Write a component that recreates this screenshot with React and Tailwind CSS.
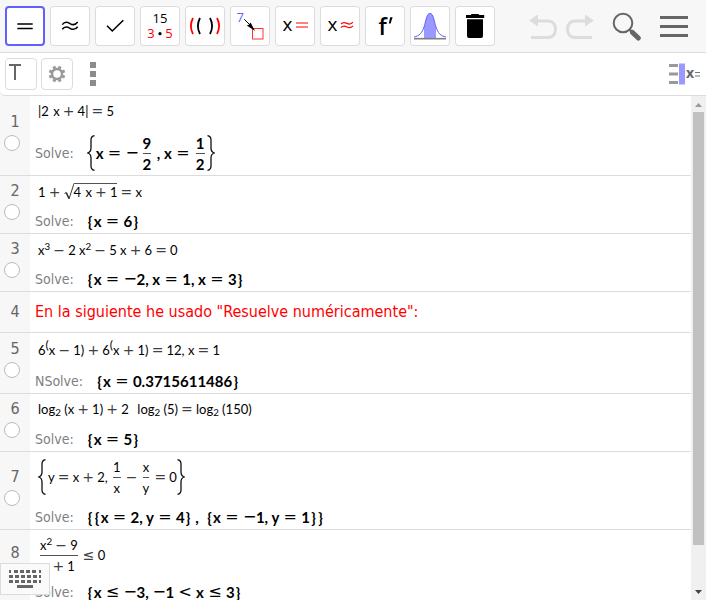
import React from "react";

const UI = "font-['DejaVu_Sans_Condensed','DejaVu_Sans',sans-serif]";

/* ---------- formula building blocks ---------- */

function Plain({ children }) {
  return (
    <div className="flex items-center whitespace-pre font-['Lato',sans-serif] text-[13px] leading-5 text-black">
      {children}
    </div>
  );
}

function Strong({ children }) {
  return (
    <div className="flex items-center whitespace-pre font-['Lato',sans-serif] text-[15px] leading-4 font-bold text-black">
      {children}
    </div>
  );
}

function Op({ children }) {
  return (
    <span className="mx-[2px] w-[14px] text-center font-['DejaVu_Sans',sans-serif] text-[14px] text-neutral-700">
      {children}
    </span>
  );
}

function BoldOp({ children }) {
  return (
    <span className="mx-1 w-[14px] text-center font-['DejaVu_Sans',sans-serif] text-[16px] font-normal">
      {children}
    </span>
  );
}

function Minus() {
  return (
    <span className="w-[13px] text-center font-['DejaVu_Sans',sans-serif] text-[16px] font-normal">−</span>
  );
}

function Group({ children }) {
  return (
    <span className="flex items-center">
      <span className="w-[7px] text-center">{"{"}</span>
      {children}
      <span className="w-[7px] text-center">{"}"}</span>
    </span>
  );
}

function Frac({ top, bottom }) {
  return (
    <span className="mx-[2px] flex flex-col items-center leading-5">
      <span className="flex items-center">{top}</span>
      <span className="h-px w-full bg-neutral-600" />
      <span className="flex items-center">{bottom}</span>
    </span>
  );
}

function Brace({ close = false }) {
  return (
    <svg width="8" height="36" viewBox="0 0 8 36" fill="none" stroke="#111" strokeWidth="1.3">
      <path
        d={
          close
            ? "M0.5 0.7C3.5 1.2 4 2.5 4 5V13C4 16 5 17.3 7.3 18C5 18.7 4 20 4 23V31C4 33.5 3.5 34.8 0.5 35.3"
            : "M7.5 0.7C4.5 1.2 4 2.5 4 5V13C4 16 3 17.3 0.7 18C3 18.7 4 20 4 23V31C4 33.5 4.5 34.8 7.5 35.3"
        }
      />
    </svg>
  );
}

function Root({ children }) {
  return (
    <span className="flex items-center">
      <svg width="10" height="17" viewBox="0 0 10 17" fill="none" stroke="#222">
        <path d="M0.5 10.5L2.2 9.5" strokeWidth="0.9" />
        <path d="M2.2 9.5L5 15.5" strokeWidth="1.5" />
        <path d="M5 16L10 0.5" strokeWidth="0.9" />
      </svg>
      <span className="flex h-[17px] items-center border-t border-neutral-600">{children}</span>
    </span>
  );
}

/* ---------- table of cells ---------- */

const cells = [
  {
    id: 1,
    gutter: "pt-[14px]",
    inputHeight: "h-[35px] pb-[5px]",
    outputHeight: "h-11",
    input: (
      <Plain>
        |2 <span className="ml-px">x</span>
        <Op>+</Op>4|<Op>=</Op>5
      </Plain>
    ),
    label: "Solve:",
    output: (
      <Strong>
        <Brace />
        <span className="ml-px">x</span>
        <BoldOp>=</BoldOp>
        <Minus />
        <span className="ml-0.5">
          <Frac top="9" bottom="2" />
        </span>
        <span> , x</span>
        <BoldOp>=</BoldOp>
        <Frac top="1" bottom="2" />
        <Brace close />
      </Strong>
    ),
  },
  {
    id: 2,
    gutter: "pt-[3px]",
    inputHeight: "h-[33px] pb-0.5",
    outputHeight: "h-6",
    input: (
      <Plain>
        1<Op>+</Op>
        <Root>
          4 <span className="ml-px">x</span>
          <Op>+</Op>1
        </Root>
        <Op>=</Op>x
      </Plain>
    ),
    label: "Solve:",
    output: (
      <Strong>
        <Group>
          x<BoldOp>=</BoldOp>6
        </Group>
      </Strong>
    ),
  },
  {
    id: 3,
    gutter: "pt-[3px]",
    inputHeight: "h-[33px] pb-0.5",
    outputHeight: "h-6",
    input: (
      <Plain>
        <span>
          x<sup>3</sup>
        </span>
        <Op>−</Op>2{" "}
        <span>
          x<sup>2</sup>
        </span>
        <Op>−</Op>5{" "}x
        <Op>+</Op>6<Op>=</Op>0
      </Plain>
    ),
    label: "Solve:",
    output: (
      <Strong>
        <Group>
          x<BoldOp>=</BoldOp>
          <Minus />
          2, x<BoldOp>=</BoldOp>
          1, x<BoldOp>=</BoldOp>3
        </Group>
      </Strong>
    ),
  },
  { id: 4, gutter: "pt-2", note: 'En la siguiente he usado "Resuelve numéricamente":' },
  {
    id: 5,
    gutter: "pt-1",
    inputHeight: "h-[35px] pb-0.5",
    outputHeight: "h-[25px]",
    input: (
      <Plain>
        <span>
          6<sup className="text-[12px]">(</sup>x
        </span>
        <Op>−</Op>1)
        <Op>+</Op>
        <span>
          6<sup className="text-[12px]">(</sup>x
        </span>
        <Op>+</Op>1)
        <Op>=</Op>12, x
        <Op>=</Op>1
      </Plain>
    ),
    label: "NSolve:",
    output: (
      <Strong>
        <Group>
          x<BoldOp>=</BoldOp>0.3715611486
        </Group>
      </Strong>
    ),
  },
  {
    id: 6,
    gutter: "pt-[3px]",
    inputHeight: "h-[33px] pb-1",
    outputHeight: "h-6",
    input: (
      <Plain>
        <span>
          log<sub>2</sub> (x
        </span>
        <Op>+</Op>1)
        <Op>+</Op>2{"  "}
        <span className="ml-0.5">
          log<sub>2</sub> (5)
        </span>
        <Op>=</Op>
        <span>
          log<sub>2</sub> (150)
        </span>
      </Plain>
    ),
    label: "Solve:",
    output: (
      <Strong>
        <Group>
          x<BoldOp>=</BoldOp>5
        </Group>
      </Strong>
    ),
  },
  {
    id: 7,
    gutter: "pt-[13px]",
    inputHeight: "h-[52px] pb-0.5",
    outputHeight: "h-[25px]",
    input: (
      <Plain>
        <Brace />
        <span className="ml-0.5">y</span>
        <Op>=</Op>x<Op>+</Op>2,{" "}
        <Frac top="1" bottom="x" />
        <Op>−</Op>
        <Frac top="x" bottom="y" />
        <Op>=</Op>0
        <Brace close />
      </Plain>
    ),
    label: "Solve:",
    output: (
      <Strong>
        <Group>
          <Group>
            x<BoldOp>=</BoldOp>
            2, y<BoldOp>=</BoldOp>4
          </Group>
          {" ,  "}
          <Group>
            x<BoldOp>=</BoldOp>
            <Minus />
            1, y<BoldOp>=</BoldOp>1
          </Group>
        </Group>
      </Strong>
    ),
  },
  {
    id: 8,
    gutter: "pt-[11px]",
    inputHeight: "h-[50px]",
    outputHeight: "h-6",
    input: (
      <Plain>
        <Frac
          top={
            <>
              <span>
                x<sup>2</sup>
              </span>
              <Op>−</Op>9
            </>
          }
          bottom={
            <>
              x<Op>+</Op>1
            </>
          }
        />
        <Op>≤</Op>0
      </Plain>
    ),
    label: "Solve:",
    output: (
      <Strong>
        <Group>
          x<BoldOp>≤</BoldOp>
          <Minus />
          3,{" "}
          <Minus />1<BoldOp>&lt;</BoldOp>x<BoldOp>≤</BoldOp>3
        </Group>
      </Strong>
    ),
  },
];

function Cell({ cell }) {
  return (
    <li className="flex shrink-0 border-b border-[#dcdcdc]">
      <div className={`w-[30px] shrink-0 bg-[#f7f7f7] ${cell.gutter}`}>
        <div className="text-center text-[16px] leading-6 text-[#666]">{cell.id}</div>
        {!cell.note && (
          <input
            type="checkbox"
            aria-label={`Show cell ${cell.id}`}
            className="ml-1 mt-px block size-4 appearance-none rounded-full border border-[#bcbcbc] bg-white"
          />
        )}
      </div>
      {cell.note ? (
        <p className="flex h-10 items-center pl-[5px] text-[16px] text-[#ff0000]">{cell.note}</p>
      ) : (
        <div className="min-w-0 flex-1">
          <div className={`flex items-center pl-2 ${cell.inputHeight}`}>{cell.input}</div>
          <div className={`flex items-center gap-[13px] pl-[5px] ${cell.outputHeight}`}>
            <span className="text-[14px] leading-4 text-[#808080]">{cell.label}</span>
            {cell.output}
          </div>
        </div>
      )}
    </li>
  );
}

/* ---------- toolbar ---------- */

const tools = [
  {
    name: "Evaluate",
    icon: <path d="M12.3 18H27.7M12.3 22.4H27.7" stroke="#000" strokeWidth="1.5" />,
  },
  {
    name: "Numeric",
    icon: (
      <g fill="none" stroke="#000" strokeWidth="1.5">
        <path d="M12.3 18.6C15 14.8 18 16.4 20 17.6S25 19.6 27.7 16" />
        <path d="M12.3 23.3C15 19.5 18 21.1 20 22.3S25 24.3 27.7 20.7" />
      </g>
    ),
  },
  {
    name: "Keep Input",
    icon: <path d="M12 19.7L17.3 25L28.3 14.3" fill="none" stroke="#000" strokeWidth="1.6" />,
  },
  {
    name: "Factor",
    icon: (
      <g className="font-['Open_Sans',sans-serif]" fontSize="13" textAnchor="middle">
        <text x="20" y="17">15</text>
        <g fill="#ff0000">
          <text x="11" y="32">3</text>
          <text x="29" y="32">5</text>
        </g>
        <circle cx="20" cy="27.7" r="1.6" />
      </g>
    ),
  },
  {
    name: "Expand",
    icon: (
      <g fill="none" strokeWidth="1.8">
        <path d="M8 12Q3.8 20 8 28M32 12Q36.2 20 32 28" stroke="#ff0000" />
        <path d="M15 12Q10.8 20 15 28M25 12Q29.2 20 25 28" stroke="#000" />
      </g>
    ),
  },
  {
    name: "Substitute",
    icon: (
      <g>
        <text x="6.5" y="16" fontSize="13" fill="#6060ff" className="font-['Open_Sans',sans-serif]">
          7
        </text>
        <rect x="22.5" y="22.5" width="10.5" height="10.5" fill="none" stroke="#ff3333" />
        <path d="M14.3 13.3L20 19" stroke="#000" />
        <path d="M25 25L16.8 19.6L18.8 18.8L20.6 16.4Z" fill="#000" />
      </g>
    ),
  },
  {
    name: "Solve",
    icon: (
      <g>
        <text x="7.5" y="25" fontSize="19" className="font-['Open_Sans',sans-serif]">x</text>
        <path d="M21 17H33M21 21H33" stroke="#ff0000" strokeWidth="1.2" />
      </g>
    ),
  },
  {
    name: "Solve Numerically",
    icon: (
      <g>
        <text x="7.5" y="25" fontSize="19" className="font-['Open_Sans',sans-serif]">x</text>
        <g fill="none" stroke="#ff0000" strokeWidth="1.2">
          <path d="M21 18C23 15.6 25.5 16.6 27 17.4S31 18.4 33 16.2" />
          <path d="M21 21.6C23 19.2 25.5 20.2 27 21S31 22 33 19.8" />
        </g>
      </g>
    ),
  },
  {
    name: "Derivative",
    icon: (
      <g>
        <text x="13.5" y="29" fontSize="23" fontWeight="600" className="font-['Open_Sans',sans-serif]">
          f
        </text>
        <path d="M25.2 11.2H27.6L25.6 17.6H23.8Z" fill="#000" />
      </g>
    ),
  },
  {
    name: "Probability Calculator",
    icon: (
      <g>
        <path d="M14 32.5V21C16.2 14.5 16.5 7.5 20 7.5S23.8 14.5 26 21V32.5Z" fill="#9999ff" />
        <path
          d="M4 31C9.5 30 12 27 14 21C16.2 14.5 16.5 7.5 20 7.5S23.8 14.5 26 21C28 27 30.5 30 36 31"
          fill="none"
          stroke="#6060ff"
        />
        <path d="M4 32.7H36" stroke="#808080" strokeWidth="1.6" />
      </g>
    ),
  },
  {
    name: "Delete",
    icon: (
      <g fill="#000">
        <path d="M11 9H15.6L16.6 8H23.4L24.4 9H29.2V12H11Z" />
        <path d="M12 13.2H28V30Q28 32 26 32H14Q12 32 12 30Z" />
      </g>
    ),
  },
];

function Tool({ tool, active }) {
  return (
    <button
      type="button"
      aria-label={tool.name}
      aria-pressed={active}
      className={`relative size-10 shrink-0 rounded-[4px] bg-white ${
        active ? "shadow-[inset_0_0_0_2px_#6060ff]" : "shadow-[inset_0_0_0_1px_#dcdcdc]"
      }`}
    >
      <svg width="40" height="40" viewBox="0 0 40 40">
        {tool.icon}
      </svg>
    </button>
  );
}

function Toolbar() {
  return (
    <header className="flex h-[53px] shrink-0 items-center gap-[5px] border-b border-[#dcdcdc] bg-[#f7f7f7] pl-[5px] pr-[18px]">
      {tools.map((tool, i) => (
        <Tool key={tool.name} tool={tool} active={i === 0} />
      ))}
      <div className="ml-auto flex items-center gap-[18px]">
        <div className="flex gap-[9px]">
          <button type="button" aria-label="Undo">
            <svg width="28" height="28" viewBox="0 0 28 28" fill="none" stroke="#dcdcdc" strokeWidth="3">
              <path d="M8 9H19C24 9 26.5 13 26.5 17.3S24 25.5 19 25.5H2" />
              <path d="M0 8.5L9 2.5V14.5Z" fill="#dcdcdc" stroke="none" />
            </svg>
          </button>
          <button type="button" aria-label="Redo">
            <svg width="28" height="28" viewBox="0 0 28 28" fill="none" stroke="#dcdcdc" strokeWidth="3">
              <path d="M20 9H9C4 9 1.5 13 1.5 17.3S4 25.5 9 25.5H26" />
              <path d="M28 8.5L19 2.5V14.5Z" fill="#dcdcdc" stroke="none" />
            </svg>
          </button>
        </div>
        <button type="button" aria-label="Search">
          <svg width="30" height="30" viewBox="0 0 30 30" fill="none" stroke="#666">
            <circle cx="11" cy="12" r="9.3" strokeWidth="2" />
            <path d="M17.5 18.5L21 22" strokeWidth="2.5" />
            <path d="M20.5 21.5L26.3 27" strokeWidth="5" strokeLinecap="round" />
          </svg>
        </button>
        <button type="button" aria-label="Menu" className="flex w-7 flex-col gap-[6px]">
          <span className="h-[3px] w-full bg-[#666]" />
          <span className="h-[3px] w-full bg-[#666]" />
          <span className="h-[3px] w-full bg-[#666]" />
        </button>
      </div>
    </header>
  );
}

function StyleBar() {
  return (
    <div className="bg-[#f7f7f7]">
      <div className="flex h-[43px] items-center rounded-bl-[5px] border-b border-[#dcdcdc] bg-white pl-[5px] pr-[5px]">
        <button
          type="button"
          aria-label="Text"
          className="size-8 rounded-[4px] border border-[#dcdcdc] pb-1 pl-[3px] text-left"
        >
          <svg width="13" height="18" viewBox="0 0 13 18">
            <path d="M0 2H12M6 2V17" stroke="#666" strokeWidth="2" />
          </svg>
        </button>
        <button
          type="button"
          aria-label="Settings"
          className="ml-1 flex size-8 items-center justify-center rounded-[4px] border border-[#dcdcdc]"
        >
          <svg width="18" height="18" viewBox="0 0 18 18" fill="none" stroke="#999">
            <circle cx="9" cy="9" r="5" strokeWidth="2.4" />
            <path
              strokeWidth="3"
              d="M11.2 3.7L12.2 1.3M6.8 3.7L5.8 1.3M11.2 14.3L12.2 16.7M6.8 14.3L5.8 16.7M14.3 6.8L16.7 5.8M14.3 11.2L16.7 12.2M3.7 6.8L1.3 5.8M3.7 11.2L1.3 12.2"
            />
          </svg>
        </button>
        <button type="button" aria-label="More" className="ml-[17px] flex flex-col gap-[3px]">
          <span className="size-[6px] bg-[#8c8c8c]" />
          <span className="size-[6px] bg-[#8c8c8c]" />
          <span className="size-[6px] bg-[#8c8c8c]" />
        </button>
        <button type="button" aria-label="CAS view" className="ml-auto">
          <svg width="32" height="22" viewBox="0 0 32 22">
            <path d="M0 2.5H9M0 11H9M0 19.5H9" stroke="#999" strokeWidth="3" />
            <rect x="10" y="0.5" width="6" height="21" fill="#9999ff" />
            <text x="17" y="15" fontSize="14" fontWeight="700" fill="#666" className="font-['Open_Sans',sans-serif]">
              x
            </text>
            <path d="M26 9.5H31M26 13H31" stroke="#777" />
          </svg>
        </button>
      </div>
    </div>
  );
}

function Scrollbar() {
  return (
    <div className="flex w-[15px] shrink-0 flex-col items-center bg-[#f0f0f0]">
      <svg width="15" height="16" viewBox="0 0 15 16">
        <path d="M4 11L7.5 7L11 11Z" fill="#999" />
      </svg>
      <div className="w-[11px] flex-[433] bg-[#c1c1c1]" />
      <div className="flex-[39]" />
      <svg width="15" height="16" viewBox="0 0 15 16">
        <path d="M4 6L7.5 10L11 6Z" fill="#444" />
      </svg>
    </div>
  );
}

export default function App() {
  return (
    <div className={`h-screen bg-white pb-0.5 pr-0.5 ${UI}`}>
      <div className="relative flex h-full flex-col overflow-hidden">
        <Toolbar />
        <StyleBar />
        <main className="flex min-h-0 flex-1">
          <ol className="flex min-w-0 flex-1 flex-col overflow-hidden">
            {cells.map((cell) => (
              <Cell key={cell.id} cell={cell} />
            ))}
          </ol>
          <Scrollbar />
        </main>
        <button
          type="button"
          aria-label="Open keyboard"
          className="absolute bottom-[5px] left-0 flex h-8 w-[50px] items-center justify-center border border-[#dcdcdc] bg-[#fafafa]"
        >
          <svg width="32" height="18" viewBox="0 0 32 18" stroke="#666" strokeWidth="3">
            <path d="M0 1.5H2M5 1.5H9M11 1.5H15M17 1.5H21M23 1.5H27M30 1.5H32" />
            <path d="M0 6.5H4M6 6.5H10M12 6.5H16M18 6.5H22M24 6.5H28M30 6.5H32" />
            <path d="M0 11.5H4M6 11.5H10M12 11.5H16M18 11.5H22M24 11.5H28M30 11.5H32" />
            <path d="M8 16.5H24" />
          </svg>
        </button>
      </div>
    </div>
  );
}
